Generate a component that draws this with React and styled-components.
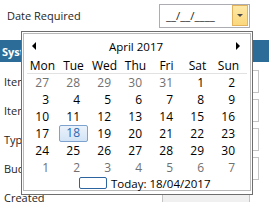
import React from "react";
import styled, { createGlobalStyle } from "styled-components";

const GlobalStyle = createGlobalStyle`
  html, body {
    margin: 0;
    padding: 0;
    background: #ffffff;
  }
  body {
    font-family: "Open Sans", "Noto Sans", sans-serif;
    font-size: 12px;
    color: #1e1e1e;
  }
`;

// ---------------- page behind the popup ---------------- //

const Page = styled.div`
  position: relative;
  width: 269px;
  height: 202px;
  overflow: hidden;
`;

const TopRow = styled.div`
  display: flex;
  align-items: center;
  height: 31px;
`;

const FieldLabel = styled.span`
  padding-left: 7px;
  font-size: 11px;
  line-height: 16px;
`;

const DateBox = styled.div`
  margin-left: auto;
  margin-right: 19px;
  width: 82px;
  height: 22px;
  border: 1px solid #abadb3;
  display: flex;
  align-items: center;
  justify-content: space-between;
  padding-left: 6px;
  padding-right: 1px;
`;

const Mask = styled.span`
  font-size: 11.5px;
  color: #1e1e1e;
`;

const DropButton = styled.div`
  width: 14px;
  height: 19px;
  background: linear-gradient(#fde9a8, #fbd77c);
  border: 1px solid #e3b25a;
  display: flex;
  align-items: center;
  justify-content: center;

  &::after {
    content: "";
    border-left: 3px solid transparent;
    border-right: 3px solid transparent;
    border-top: 3px solid #4a4a4a;
  }
`;

const Band = styled.div`
  margin-top: 9px;
  height: 22px;
  background: #2b6d98;
  color: #ffffff;
  font-weight: 700;
  font-size: 11px;
  display: flex;
  align-items: center;
  padding-left: 2px;
`;

const Form = styled.div`
  margin-top: 5px;
  display: flex;
  flex-direction: column;
`;

const FormRow = styled.div`
  height: 29px;
  display: flex;
  align-items: center;
  padding-left: 4px;
`;

const RowLabel = styled.span`
  width: ${({ $boxLeft }) => $boxLeft - 4}px;
  font-size: 11px;
  flex-shrink: 0;
`;

const TextBox = styled.div`
  width: ${({ $width }) => $width}px;
  height: 21px;
  border: 1px solid #c4c4c4;
  background: ${({ $disabled }) => ($disabled ? "#f0f0f0" : "#ffffff")};
`;

// ---------------- calendar popup ---------------- //

const Popup = styled.div`
  position: absolute;
  left: 21px;
  top: 31px;
  width: 228px;
  height: 160px;
  border: 1px solid #6e6e6e;
  padding: 1px;
  background: #ffffff;
`;

const PopupInner = styled.div`
  height: 156px;
  border: 1px solid #b9b9b9;
  display: flex;
  flex-direction: column;
`;

const MonthHeader = styled.div`
  height: 32px;
  display: flex;
  align-items: center;
  justify-content: space-between;
  padding: 0 10px 0 8px;
  font-size: 11.5px;
  color: #000000;
`;

const Arrow = styled.span`
  width: 0;
  height: 0;
  border-top: 4px solid transparent;
  border-bottom: 4px solid transparent;
  ${({ $dir }) =>
    $dir === "left"
      ? "border-right: 4px solid #000;"
      : "border-left: 4px solid #000;"}
`;

const Grid = styled.div`
  display: grid;
  grid-template-columns: repeat(7, 31px);
  padding: 0 3px;
`;

const DayNames = styled(Grid)`
  height: 15px;
  align-items: center;
  border-bottom: 1px solid #e2e2e2;
  margin: 0 3px;
  padding: 0;
`;

const DayName = styled.span`
  text-align: center;
  font-size: 12px;
  line-height: 15px;
  color: #000000;
`;

const DayCell = styled.span`
  height: 15px;
  line-height: 15px;
  text-align: right;
  padding-right: 8px;
  font-size: 12px;
  border: 1px solid transparent;
  color: ${({ $muted }) => ($muted ? "#707070" : "#000000")};

  ${({ $selected }) =>
    $selected &&
    `
    line-height: 13px;
    margin: 0 1px;
    padding-right: 7px;
    color: #2b68b0;
    border-color: #7da2ce;
    border-radius: 2px;
    background: linear-gradient(#eaf2fb, #d3e4f6);
  `}
`;

const TodayRow = styled.div`
  height: 14px;
  display: flex;
  align-items: center;
  gap: 4px;
  padding-left: 55px;
  font-size: 11.5px;
  color: #000000;
`;

const TodayMark = styled.span`
  width: 26px;
  height: 10px;
  border: 1px solid #2c64a0;
  border-radius: 2px;
`;

const weeks = [
  [27, 28, 29, 30, 31, 1, 2],
  [3, 4, 5, 6, 7, 8, 9],
  [10, 11, 12, 13, 14, 15, 16],
  [17, 18, 19, 20, 21, 22, 23],
  [24, 25, 26, 27, 28, 29, 30],
  [1, 2, 3, 4, 5, 6, 7],
];

const dayNames = ["Mon", "Tue", "Wed", "Thu", "Fri", "Sat", "Sun"];

const rows = [
  { label: "Item", left: 100, width: 157 },
  { label: "Item", left: 100, width: 157 },
  { label: "Type", left: 100, width: 157 },
  { label: "Budget", left: 100, width: 157 },
  { label: "Created", left: 162, width: 86, disabled: true },
];

const App = () => {
  return (
    <Page>
      <GlobalStyle />
      <TopRow>
        <FieldLabel>Date Required</FieldLabel>
        <DateBox>
          <Mask>__/__/____</Mask>
          <DropButton />
        </DateBox>
      </TopRow>
      <Band>System</Band>
      <Form>
        {rows.map((r, i) => (
          <FormRow key={i}>
            <RowLabel $boxLeft={r.left}>{r.label}</RowLabel>
            <TextBox $width={r.width} $disabled={r.disabled} />
          </FormRow>
        ))}
      </Form>

      <Popup>
        <PopupInner>
          <MonthHeader>
            <Arrow $dir="left" />
            <span>April 2017</span>
            <Arrow $dir="right" />
          </MonthHeader>
          <DayNames>
            {dayNames.map((d) => (
              <DayName key={d}>{d}</DayName>
            ))}
          </DayNames>
          <Grid>
            {weeks.map((week, w) =>
              week.map((day, d) => {
                const muted = (w === 0 && day > 20) || w === 5;
                return (
                  <DayCell
                    key={`${w}-${d}`}
                    $muted={muted}
                    $selected={w === 3 && day === 18}
                  >
                    {day}
                  </DayCell>
                );
              })
            )}
          </Grid>
          <TodayRow>
            <TodayMark />
            <span>Today: 18/04/2017</span>
          </TodayRow>
        </PopupInner>
      </Popup>
    </Page>
  );
};

export default App;
